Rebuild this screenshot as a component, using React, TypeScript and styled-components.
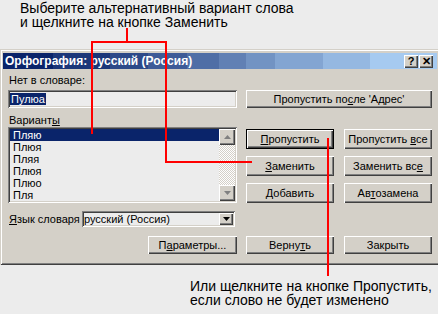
import styled, { createGlobalStyle } from 'styled-components';

const GlobalStyle = createGlobalStyle`
  html, body {
    margin: 0;
    padding: 0;
    background: #ececec;
  }
  body {
    font-family: 'Liberation Sans', Arial, sans-serif;
  }
`;

const Page = styled.div`
  position: relative;
  width: 438px;
  height: 314px;
  overflow: hidden;
  background: #ececec;
`;

const Caption = styled.div<{ $indent: number; $top: number }>`
  padding-left: ${(p) => p.$indent}px;
  margin-top: ${(p) => p.$top}px;
  font-size: 14px;
  line-height: 14px;
  color: #000;
  white-space: nowrap;
`;

const Dialog = styled.div`
  width: 442px;
  box-sizing: border-box;
  margin-top: 20px;
  padding: 4px 5px 3px 3px;
  background: #d4d0c8;
  box-shadow: inset 1px 1px #d4d0c8, inset -1px -1px #404040, inset 2px 2px #fff, inset -2px -2px #808080;
`;

const TitleBar = styled.div`
  display: flex;
  align-items: center;
  justify-content: space-between;
  height: 16px;
  padding: 0 4px 0 2px;
  background: linear-gradient(
    to right,
    #0a246a 0 50px,
    #1b3679 50px 107px,
    #2d4988 107px 145px,
    #3e5b97 145px 184px,
    #4f6ea6 184px 216px,
    #6180b4 216px 243px,
    #7293c3 243px 272px,
    #83a5d2 272px 320px,
    #95b8e1 320px 367px,
    #a6caf0 367px
  );
  color: #fff;
  font-size: 12px;
  font-weight: bold;
  white-space: nowrap;
`;

const TitleButtons = styled.div`
  display: flex;
  gap: 1px;
`;

const TitleButton = styled.div`
  display: flex;
  align-items: center;
  justify-content: center;
  width: 14px;
  height: 13px;
  background: #d4d0c8;
  color: #000;
  font-size: 11px;
  font-weight: bold;
  box-shadow: inset 1px 1px #fff, inset -1px -1px #404040, inset -2px -2px #808080;
`;

const Client = styled.div`
  display: flex;
  flex-direction: column;
  padding: 5px 0 8px 5px;
  font-size: 11px;
  color: #000;
`;

const Row = styled.div<{ $top?: number }>`
  display: grid;
  grid-template-columns: 229px 186px;
  column-gap: 9px;
  align-items: end;
  margin-top: ${(p) => p.$top ?? 0}px;
`;

const Field = styled.div`
  display: flex;
  flex-direction: column;
`;

const Label = styled.div<{ $bottom?: number }>`
  height: 13px;
  line-height: 13px;
  padding-left: 1px;
  margin-bottom: ${(p) => p.$bottom ?? 0}px;
  white-space: nowrap;
`;

const sunken = `
  box-shadow: inset 1px 1px #808080, inset -1px -1px #fff, inset 2px 2px #404040, inset -2px -2px #d4d0c8;
`;

const TextBox = styled.div`
  height: 18px;
  box-sizing: border-box;
  padding: 3px 2px 2px 2px;
  background: #ececec;
  line-height: 13px;
  ${sunken}
`;

const Selected = styled.span`
  background: #0a246a;
  color: #fff;
  padding: 0 1px;
`;

const Button = styled.button<{ $w: number; $h?: number; $default?: boolean }>`
  width: ${(p) => p.$w}px;
  height: ${(p) => p.$h ?? 20}px;
  padding: 0;
  border: none;
  background: #d4d0c8;
  color: #000;
  font-family: 'Liberation Sans', Arial, sans-serif;
  font-size: 11px;
  white-space: nowrap;
  box-shadow: ${(p) =>
    p.$default
      ? 'inset 0 0 0 1px #000, inset 1px 1px 0 1px #fff, inset -2px -2px #404040, inset -3px -3px #808080'
      : 'inset 1px 1px #fff, inset -1px -1px #404040, inset -2px -2px #808080'};
`;

const ButtonPair = styled.div`
  display: flex;
  justify-content: space-between;
`;

const ButtonStack = styled.div`
  display: flex;
  flex-direction: column;
  gap: 7px;
`;

const ListBox = styled.div`
  display: flex;
  height: 76px;
  box-sizing: border-box;
  padding: 2px;
  background: #ececec;
  ${sunken}
`;

const Items = styled.div`
  flex: 1;
  display: flex;
  flex-direction: column;
`;

const Item = styled.div<{ $active?: boolean }>`
  height: 12px;
  line-height: 12px;
  padding-left: 3px;
  background: ${(p) => (p.$active ? '#0a246a' : 'transparent')};
  color: ${(p) => (p.$active ? '#fff' : '#000')};
`;

const ScrollBar = styled.div`
  display: flex;
  flex-direction: column;
  width: 16px;
`;

const Track = styled.div`
  flex: 1;
  background-color: #d4d0c8;
  background-image: repeating-conic-gradient(#fff 0 25%, #d4d0c8 0 50%);
  background-size: 2px 2px;
`;

const ArrowButton = styled.div<{ $w?: number; $h?: number }>`
  display: flex;
  align-items: center;
  justify-content: center;
  width: ${(p) => p.$w ?? 16}px;
  height: ${(p) => p.$h ?? 16}px;
  background: #d4d0c8;
  box-shadow: inset 1px 1px #fff, inset -1px -1px #404040, inset -2px -2px #808080;
`;

const LangRow = styled.div`
  display: flex;
  align-items: center;
  justify-content: space-between;
  padding-right: 2px;
`;

const Combo = styled.div`
  display: flex;
  align-items: center;
  justify-content: space-between;
  width: 153px;
  height: 16px;
  box-sizing: border-box;
  padding: 2px 2px 2px 2px;
  background: #ececec;
  ${sunken}
`;

const ComboText = styled.span`
  line-height: 12px;
`;

const RightAlign = styled.div`
  display: flex;
  justify-content: flex-end;
`;

const Callouts = styled.svg`
  position: absolute;
  top: 0;
  left: 0;
  pointer-events: none;
`;

const Arrow = ({ dir, color }: { dir: 'up' | 'down'; color: string }) => (
  <svg width="7" height="4" viewBox="0 0 7 4">
    <path d={dir === 'up' ? 'M3.5 0L7 4H0Z' : 'M0 0H7L3.5 4Z'} fill={color} />
  </svg>
);

const suggestions = ['Пляю', 'Плюя', 'Пляя', 'Плюя', 'Плюо', 'Пля'];

export default function App() {
  return (
    <Page>
      <GlobalStyle />
      <Caption $indent={20} $top={1}>
        Выберите альтернативный вариант слова
        <br />и щелкните на кнопке Заменить
      </Caption>

      <Dialog>
        <TitleBar>
          <span>Орфография: русский (Россия)</span>
          <TitleButtons>
            <TitleButton>?</TitleButton>
            <TitleButton>✕</TitleButton>
          </TitleButtons>
        </TitleBar>

        <Client>
          <Row>
            <Field>
              <Label $bottom={3}>Нет в словаре:</Label>
              <TextBox>
                <Selected>Пулюа</Selected>
              </TextBox>
            </Field>
            <Button $w={186} $h={18}>
              Пропустить по<u>с</u>ле 'Адрес'
            </Button>
          </Row>

          <Row $top={6}>
            <Field>
              <Label>
                Вариант<u>ы</u>
              </Label>
              <ListBox>
                <Items>
                  {suggestions.map((s, i) => (
                    <Item key={i} $active={i === 0}>
                      {s}
                    </Item>
                  ))}
                </Items>
                <ScrollBar>
                  <ArrowButton>
                    <Arrow dir="up" color="#808080" />
                  </ArrowButton>
                  <Track />
                  <ArrowButton>
                    <Arrow dir="down" color="#808080" />
                  </ArrowButton>
                </ScrollBar>
              </ListBox>
            </Field>
            <ButtonStack>
              <ButtonPair>
                <Button $w={88} $default>
                  <u>П</u>ропустить
                </Button>
                <Button $w={88}>
                  Пропустить <u>в</u>се
                </Button>
              </ButtonPair>
              <ButtonPair>
                <Button $w={88}>
                  <u>З</u>аменить
                </Button>
                <Button $w={88}>
                  Заменить вс<u>е</u>
                </Button>
              </ButtonPair>
              <ButtonPair>
                <Button $w={88}>
                  <u>Д</u>обавить
                </Button>
                <Button $w={88}>
                  Ав<u>т</u>озамена
                </Button>
              </ButtonPair>
            </ButtonStack>
          </Row>

          <Row $top={8}>
            <LangRow>
              <Label>
                <u>Я</u>зык словаря
              </Label>
              <Combo>
                <ComboText>русский (Россия)</ComboText>
                <ArrowButton $w={14} $h={12}>
                  <Arrow dir="down" color="#000" />
                </ArrowButton>
              </Combo>
            </LangRow>
            <div />
          </Row>

          <Row $top={9}>
            <RightAlign>
              <Button $w={89} $h={18}>
                П<u>а</u>раметры...
              </Button>
            </RightAlign>
            <ButtonPair>
              <Button $w={88} $h={18}>
                Верну<u>т</u>ь
              </Button>
              <Button $w={88} $h={18}>
                Закрыть
              </Button>
            </ButtonPair>
          </Row>
        </Client>
      </Dialog>

      <Caption $indent={190} $top={14}>
        Или щелкните на кнопке Пропустить,
        <br />
        если слово не будет изменено
      </Caption>

      <Callouts width="438" height="314" viewBox="0 0 438 314">
        <g stroke="#ff0000" strokeWidth="2" fill="none" shapeRendering="crispEdges">
          <path d="M127 28V42M91 42H167M92 42V134M166 42V162H252" />
          <path d="M328 138V276" />
        </g>
      </Callouts>
    </Page>
  );
}
